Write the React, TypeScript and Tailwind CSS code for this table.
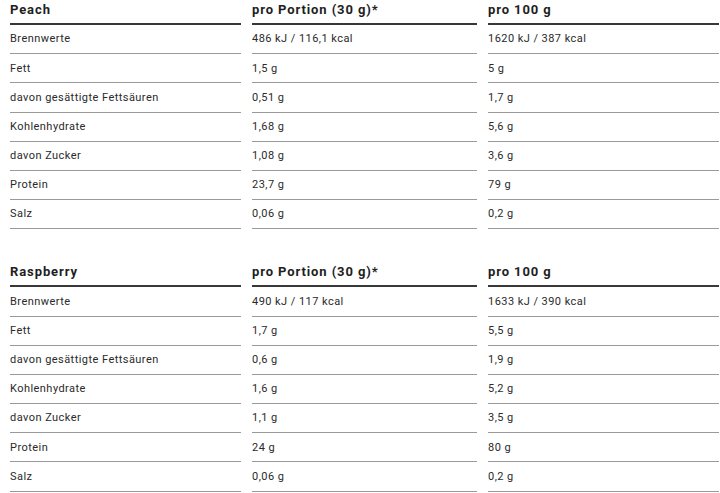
import React from "react";

type Row = [string, string, string];

const peach: Row[] = [
  ["Brennwerte", "486 kJ / 116,1 kcal", "1620 kJ / 387 kcal"],
  ["Fett", "1,5 g", "5 g"],
  ["davon gesättigte Fettsäuren", "0,51 g", "1,7 g"],
  ["Kohlenhydrate", "1,68 g", "5,6 g"],
  ["davon Zucker", "1,08 g", "3,6 g"],
  ["Protein", "23,7 g", "79 g"],
  ["Salz", "0,06 g", "0,2 g"],
];

const raspberry: Row[] = [
  ["Brennwerte", "490 kJ / 117 kcal", "1633 kJ / 390 kcal"],
  ["Fett", "1,7 g", "5,5 g"],
  ["davon gesättigte Fettsäuren", "0,6 g", "1,9 g"],
  ["Kohlenhydrate", "1,6 g", "5,2 g"],
  ["davon Zucker", "1,1 g", "3,5 g"],
  ["Protein", "24 g", "80 g"],
  ["Salz", "0,06 g", "0,2 g"],
];

function Table({ title, rows }: { title: string; rows: Row[] }) {
  const heads = [title, "pro Portion (30 g)*", "pro 100 g"];
  return (
    <div className="grid grid-cols-[231px_225px_231px] gap-x-[11px]">
      {heads.map((h) => (
        <div
          key={h}
          className="h-[25px] border-b-2 border-[#383838] pt-[1px] text-[13px] leading-[17px] font-bold tracking-[0.9px] text-[#1e1e1e]"
        >
          {h}
        </div>
      ))}
      {rows.map((r) =>
        r.map((c, i) => (
          <div
            key={r[0] + i}
            className="h-[29.2px] border-b border-[#9a9a9a] flex items-center pt-[1px] text-[11px] tracking-[0.45px] text-[#2a2a2a]"
          >
            {c}
          </div>
        ))
      )}
    </div>
  );
}

export default function App() {
  return (
    <div
      className="w-[720px] h-[493px] bg-white pl-[10px] overflow-hidden"
      style={{ fontFamily: "Roboto, 'Liberation Sans', sans-serif" }}
    >
      <Table title="Peach" rows={peach} />
      <div className="h-[33px]" />
      <Table title="Raspberry" rows={raspberry} />
    </div>
  );
}
